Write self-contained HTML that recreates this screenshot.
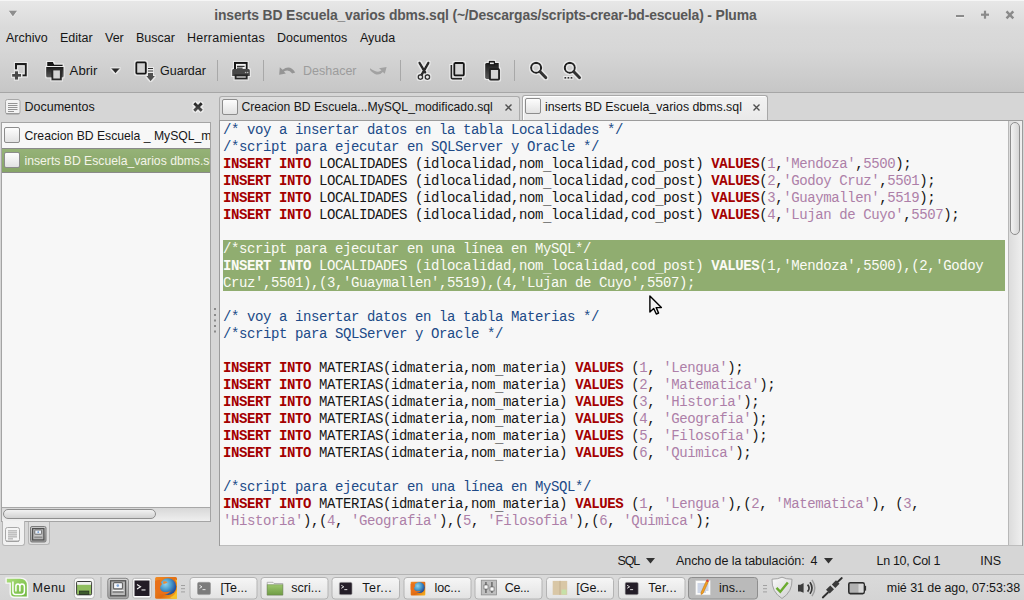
<!DOCTYPE html>
<html><head><meta charset="utf-8">
<style>
*{margin:0;padding:0;box-sizing:border-box}
html,body{width:1024px;height:600px;overflow:hidden;background:#d6d6d6;font-family:"Liberation Sans",sans-serif;color:#333;position:relative}
.a{position:absolute}
svg{position:absolute;overflow:visible}
.t{position:absolute;white-space:pre;line-height:1;font-size:12.5px;color:#161616}
#hdr{left:0;top:0;width:1024px;height:93px;background:linear-gradient(#e8e8e8 0px,#dadada 28px,#d7d7d7 48px,#d3d3d3 60px,#c6c6c6 92px);border-bottom:1px solid #a6a6a6}
#hdr:before{content:"";position:absolute;left:0;top:0;width:1024px;height:1px;background:#f6f6f6}
#code{position:absolute;left:223px;top:122px;width:790px;height:424px;overflow:hidden;font-family:"Liberation Mono",monospace;font-size:14px;letter-spacing:-0.4px;line-height:17px;color:#151515;white-space:pre}
.ln{height:17px}
.u{position:relative;top:2px}
.kw{color:#a40000}
.cm{color:#204a87}
.st{color:#ad7fa8}
.sl{color:#fbfbf5}
.chk{position:absolute;width:16px;height:16px;border:1px solid #8c8c8c;border-radius:2px;background:linear-gradient(#fdfdfd,#e2e2e2)}
</style></head><body>
<div id="hdr" class="a"></div>
<div class="t" style="left:214.3px;top:8.7px;font-size:13.9px;letter-spacing:-0.145px;font-weight:bold;color:#585858">inserts BD Escuela_varios dbms.sql (~/Descargas/scripts-crear-bd-escuela) - Pluma</div>
<div class="t" style="left:6px;top:31.5px">Archivo</div>
<div class="t" style="left:60px;top:31.5px">Editar</div>
<div class="t" style="left:105px;top:31.5px">Ver</div>
<div class="t" style="left:136px;top:31.5px">Buscar</div>
<div class="t" style="left:187px;top:31.5px;letter-spacing:0.24px">Herramientas</div>
<div class="t" style="left:277px;top:31.5px">Documentos</div>
<div class="t" style="left:360px;top:31.5px">Ayuda</div>
<div class="t" style="left:69.6px;top:63.7px;font-size:13.2px">Abrir</div>
<div class="t" style="left:160px;top:64.5px">Guardar</div>
<div class="t" style="left:303px;top:64.5px;color:#9c9c9c">Deshacer</div>
<svg style="left:0;top:0" width="1024" height="93">
<defs>
<linearGradient id="gd" x1="0" y1="0" x2="0" y2="1"><stop offset="0" stop-color="#1c1c1c"/><stop offset="1" stop-color="#5a5a5a"/></linearGradient>
<linearGradient id="gx" gradientUnits="userSpaceOnUse" x1="0" y1="102" x2="0" y2="112"><stop offset="0" stop-color="#1e1e1e"/><stop offset="1" stop-color="#555"/></linearGradient>
<filter id="glow" x="-20%" y="-20%" width="140%" height="140%"><feMorphology in="SourceAlpha" operator="dilate" radius="1" result="d"/><feFlood flood-color="#fff" flood-opacity="0.55"/><feComposite in2="d" operator="in" result="w"/><feMerge><feMergeNode in="w"/><feMergeNode in="SourceGraphic"/></feMerge></filter>
</defs>
<!-- title triangle -->
<path d="M8.6 11.6H17.1L12.85 17.6Z" fill="#fafafa" opacity="0.8"/><path d="M8.8 10.8H17L12.9 16.4Z" fill="#8e8e8e"/>
<!-- window buttons -->
<rect x="956" y="15" width="8" height="2.2" fill="#8a8a8a"/>
<rect x="956" y="17.2" width="8" height="1" fill="#f4f4f4"/>
<rect x="981" y="13.6" width="8" height="2.2" fill="#8a8a8a"/>
<rect x="983.9" y="10.7" width="2.2" height="8" fill="#8a8a8a"/>
<path d="M1006.5 11.3L1013.3 18.3M1013.3 11.3L1006.5 18.3" stroke="#8a8a8a" stroke-width="2.4"/>
<g filter="url(#glow)">
<!-- new -->
<path d="M16 69.5V64.1H25.8V75.3H22.3" fill="none" stroke="#1e1e1e" stroke-width="2.2"/>
<rect x="12.1" y="74" width="8.9" height="2.8" fill="#484848"/>
<rect x="14.9" y="71.2" width="3.1" height="8.5" fill="#484848"/>
<!-- open -->
<path d="M47.1 62.1H53L54.2 64.4H62.8V66H47.1Z" fill="#151515"/>
<path d="M46.1 67.1H63.7V76Q63.7 77.5 62.2 77.5H47.6Q46.1 77.5 46.1 76Z" fill="url(#gd)"/>
<rect x="52.3" y="69.4" width="8.6" height="10.1" fill="#d4d4d4" stroke="#2a2a2a" stroke-width="2"/>
<!-- dropdown -->
<path d="M111 68.3H120L115.5 73.3Z" fill="#2a2a2a"/>
<!-- save -->
<rect x="136.2" y="62.2" width="9.7" height="11.5" rx="1" fill="#d2d2d2" stroke="#151515" stroke-width="2"/>
<rect x="148" y="68" width="5" height="1" fill="#333"/>
<rect x="148" y="70.4" width="5" height="1.2" fill="#333"/>
<rect x="148" y="73" width="5" height="3.2" fill="#505050"/>
<path d="M146.2 76.1H155L150.6 81.3Z" fill="#505050"/>
<!-- print -->
<rect x="235" y="62.9" width="11.8" height="7" fill="#f4f4f4" stroke="#151515" stroke-width="2"/>
<rect x="237" y="65.8" width="7.6" height="1.1" fill="#222"/>
<rect x="237" y="67.6" width="5.6" height="1.1" fill="#222"/>
<path d="M233.5 69H248.5Q249.9 69 249.9 70.4V76.1H232.1V70.4Q232.1 69 233.5 69Z" fill="#464646"/>
<circle cx="245.6" cy="72.5" r="0.8" fill="#bbb"/><circle cx="247.7" cy="72.5" r="0.8" fill="#bbb"/>
<rect x="235.5" y="75.4" width="11.3" height="3.2" fill="#eaeaea" stroke="#262626" stroke-width="2"/>
<!-- cut -->
<path d="M419.5 62.8L425.2 72.5M428.4 62.8L421.8 74.5" stroke="#2a2a2a" stroke-width="2.6" stroke-linecap="round"/>
<circle cx="420.4" cy="77.1" r="2.2" fill="none" stroke="#333" stroke-width="1.6"/>
<circle cx="427.4" cy="77.1" r="2.2" fill="none" stroke="#333" stroke-width="1.6"/>
<!-- copy -->
<path d="M451.3 65V77.5Q451.3 78.7 452.5 78.7H462" fill="none" stroke="#262626" stroke-width="1.9"/>
<rect x="454.2" y="63" width="9.7" height="12.6" rx="1" fill="#d4d4d4" stroke="#161616" stroke-width="2"/>
<!-- paste -->
<path d="M486.5 62.9H498.9V79H486.5Q485.1 79 485.1 77.6V64.3Q485.1 62.9 486.5 62.9Z" fill="url(#gd)"/>
<rect x="488.6" y="60.8" width="6.5" height="4.4" rx="1" fill="#1a1a1a"/>
<rect x="490" y="62.5" width="3.8" height="1.6" fill="#e8e8e8"/>
<rect x="489.9" y="69.1" width="9.2" height="10.6" rx="0.8" fill="#d4d4d4" stroke="#222" stroke-width="2"/>
<!-- find -->
<circle cx="536.1" cy="67.8" r="5" fill="none" stroke="#222" stroke-width="2.2"/>
<path d="M540 71.7L545.8 77.6" stroke="#333" stroke-width="3.2" stroke-linecap="round"/>
<circle cx="569.8" cy="67.8" r="5" fill="none" stroke="#222" stroke-width="2.2"/>
<path d="M573.7 71.7L579.5 77.6" stroke="#333" stroke-width="3.2" stroke-linecap="round"/>
<rect x="564.3" y="77" width="2" height="1.8" fill="#333"/><rect x="567.4" y="77" width="2" height="1.8" fill="#333"/><rect x="570.5" y="77" width="2" height="1.8" fill="#333"/>
</g>
<!-- undo / redo (disabled) -->
<path d="M279.8 67.3L279.2 74.7L285.9 73.4L283.8 71.6Q288.5 68.5 292.2 73.4L295.2 72.5Q290 64 282.6 69.8Z" fill="#959595"/>
<path d="M370 68.3Q377.85 73.9 381.5 70.3L379 68.2L386.6 66.9L384.8 73.8L382.8 72Q377.8 77.7 370.8 71Q369.6 69.5 370 68.3Z" fill="#a2a2a2"/>
<!-- separators -->
<rect x="217" y="60" width="1" height="21" fill="#a8a8a8"/>
<rect x="263" y="60" width="1" height="21" fill="#a8a8a8"/>
<rect x="400" y="60" width="1" height="21" fill="#a8a8a8"/>
<rect x="514" y="60" width="1" height="21" fill="#a8a8a8"/>
<!-- side panel icons -->
<rect x="5.5" y="99.5" width="14.5" height="14.5" rx="2" fill="#f3f3f3" stroke="#a8a8a8"/>
<rect x="6" y="113" width="13.5" height="1.2" fill="#9a9a9a"/>
<g fill="#8a8a8a"><rect x="8" y="103" width="9.5" height="0.9"/><rect x="8" y="105" width="9.5" height="0.9"/><rect x="8" y="107" width="9.5" height="0.9"/><rect x="8" y="109" width="9.5" height="0.9"/><rect x="8" y="111" width="6" height="0.9"/></g>
<g filter="url(#glow)"><path d="M194.2 103.2L201.8 110.8M201.8 103.2L194.2 110.8" stroke="url(#gx)" stroke-width="3.1" stroke-linecap="butt"/></g>
</svg>

<!-- side panel -->
<div class="t" style="left:24.5px;top:100.5px">Documentos</div>
<div class="a" style="left:1px;top:122px;width:210px;height:400px;background:#f7f7f7;border:1px solid #a4a4a4"></div>
<div class="a" style="left:2px;top:148px;width:208px;height:25px;background:linear-gradient(#95b277,#87a567);border-top:1px solid #8a8a8a;border-bottom:1px solid #8a8a8a"></div>
<div class="chk" style="left:4px;top:127px"></div>
<div class="chk" style="left:4px;top:152px"></div>
<div class="a" style="left:24px;top:128px;width:186px;height:20px;overflow:hidden"><div class="t" style="left:0.5px;top:1.5px;font-size:12.2px">Creacion BD Escuela _ MySQL_modificado.sql</div></div>
<div class="a" style="left:24px;top:153px;width:186px;height:20px;overflow:hidden"><div class="t" style="left:0.5px;top:1.5px;font-size:12.2px;color:#f4f4e8">inserts BD Escuela_varios dbms.sql</div></div>
<!-- h scrollbar -->
<div class="a" style="left:2px;top:507px;width:208px;height:14px;background:linear-gradient(#d8d8d8,#efefef);border-top:1px solid #a8a8a8"></div>
<div class="a" style="left:3px;top:509px;width:153px;height:10px;border:1px solid #8e8e8e;border-radius:5px;background:linear-gradient(#f2f2f2,#d2d2d2)"></div>
<!-- panel tabs -->
<div class="a" style="left:2px;top:521px;width:23px;height:25px;background:#f1f1f1;border:1px solid #b5b5b5;border-top:none;border-radius:0 0 3px 3px"></div>
<div class="a" style="left:28px;top:522px;width:22px;height:23px;background:#dedede;border:1px solid #b5b5b5;border-top:none;border-radius:0 0 3px 3px"></div>
<svg style="left:0;top:520px" width="60" height="30">
<rect x="5.5" y="7.5" width="14" height="14" rx="2" fill="#f5f5f5" stroke="#a8a8a8"/>
<rect x="6" y="20.6" width="13" height="1" fill="#9c9c9c"/>
<g fill="#8c8c8c"><rect x="8" y="10.5" width="9" height="0.8"/><rect x="8" y="12.5" width="9" height="0.8"/><rect x="8" y="14.5" width="9" height="0.8"/><rect x="8" y="16.5" width="9" height="0.8"/><rect x="8" y="18.5" width="5" height="0.8"/></g>
<rect x="30.5" y="6.5" width="15.5" height="15.5" rx="1.5" fill="url(#cg2)" stroke="#7a7a7a"/>
<defs><linearGradient id="cg2" x1="0" y1="0" x2="0" y2="1"><stop offset="0" stop-color="#c8c8c8"/><stop offset="1" stop-color="#9a9a9a"/></linearGradient></defs>
<rect x="32.6" y="8.6" width="11.3" height="11.3" fill="#b4b4b4" stroke="#505050" stroke-width="1.2"/>
<rect x="34.8" y="10" width="6.8" height="4.2" rx="0.6" fill="#eef2f8" stroke="#666" stroke-width="0.9"/>
<circle cx="38.2" cy="12.1" r="0.9" fill="#6a96d0"/>
<rect x="34.3" y="15.6" width="8" height="1" fill="#e8e8e8"/><rect x="34.3" y="16.6" width="8" height="0.9" fill="#666"/>
</svg>
<!-- grip -->
<div class="a" style="left:214px;top:308px;width:2px;height:2px;background:#8a8a8a;box-shadow:0 6px #8a8a8a,0 11.5px #8a8a8a,0 17px #8a8a8a,0 22.5px #8a8a8a"></div>
<!-- notebook tabs -->
<div class="a" style="left:219px;top:96px;width:301px;height:25px;background:linear-gradient(#dedede,#d8d8d8);border:1px solid #acacac;border-bottom:none;border-radius:3px 3px 0 0"></div>
<div class="a" style="left:522px;top:95px;width:246px;height:26px;background:linear-gradient(#f2f2f2,#e9e9e9);border:1px solid #a8a8a8;border-bottom:none;border-radius:3px 3px 0 0;box-shadow:inset 1px 1px #fff"></div>
<div class="chk" style="left:222px;top:99px;width:16px;height:16px"></div>
<div class="chk" style="left:525px;top:98px;width:16px;height:16px"></div>
<div class="t" style="left:241.5px;top:100.5px;font-size:12.2px">Creacion BD Escuela...MySQL_modificado.sql</div>
<div class="t" style="left:545px;top:100.5px;font-size:12.35px">inserts BD Escuela_varios dbms.sql</div>
<svg style="left:505px;top:103.5px" width="7" height="7"><path d="M0.5 0.5L6.5 6.5M6.5 0.5L0.5 6.5" stroke="#505050" stroke-width="1.4"/></svg>
<svg style="left:753px;top:103.5px" width="7" height="7"><path d="M0.5 0.5L6.5 6.5M6.5 0.5L0.5 6.5" stroke="#505050" stroke-width="1.4"/></svg>
<!-- editor -->
<div class="a" style="left:219px;top:120px;width:804px;height:426px;background:#f7f7f7;border:1px solid #9c9c9c"></div>
<div class="a" style="left:223px;top:240px;width:782px;height:51px;background:#90ad70"></div>
<div id="code"><div class="ln"><span class="cm">/* voy a insertar datos en la tabla Localidades */</span></div><div class="ln"><span class="cm">/*script para ejecutar en SQLServer y Oracle */</span></div><div class="ln"><b class="kw">INSERT</b> <b class="kw">INTO</b> LOCALIDADES (idlocalidad,nom<span class="u">_</span>localidad,cod<span class="u">_</span>post) <b class="kw">VALUES</b>(<span class="st">1</span>,<span class="st">&#x27;Mendoza&#x27;</span>,<span class="st">5500</span>);</div><div class="ln"><b class="kw">INSERT</b> <b class="kw">INTO</b> LOCALIDADES (idlocalidad,nom<span class="u">_</span>localidad,cod<span class="u">_</span>post) <b class="kw">VALUES</b>(<span class="st">2</span>,<span class="st">&#x27;Godoy Cruz&#x27;</span>,<span class="st">5501</span>);</div><div class="ln"><b class="kw">INSERT</b> <b class="kw">INTO</b> LOCALIDADES (idlocalidad,nom<span class="u">_</span>localidad,cod<span class="u">_</span>post) <b class="kw">VALUES</b>(<span class="st">3</span>,<span class="st">&#x27;Guaymallen&#x27;</span>,<span class="st">5519</span>);</div><div class="ln"><b class="kw">INSERT</b> <b class="kw">INTO</b> LOCALIDADES (idlocalidad,nom<span class="u">_</span>localidad,cod<span class="u">_</span>post) <b class="kw">VALUES</b>(<span class="st">4</span>,<span class="st">&#x27;Lujan de Cuyo&#x27;</span>,<span class="st">5507</span>);</div><div class="ln">&#8203;</div><div class="ln sl">/*script para ejecutar en una línea en MySQL*/</div><div class="ln sl"><b>INSERT</b> <b>INTO</b> LOCALIDADES (idlocalidad,nom<span class="u">_</span>localidad,cod<span class="u">_</span>post) <b>VALUES</b>(1,&#x27;Mendoza&#x27;,5500),(2,&#x27;Godoy</div><div class="ln sl">Cruz&#x27;,5501),(3,&#x27;Guaymallen&#x27;,5519),(4,&#x27;Lujan de Cuyo&#x27;,5507);</div><div class="ln">&#8203;</div><div class="ln"><span class="cm">/* voy a insertar datos en la tabla Materias */</span></div><div class="ln"><span class="cm">/*script para SQLServer y Oracle */</span></div><div class="ln">&#8203;</div><div class="ln"><b class="kw">INSERT</b> <b class="kw">INTO</b> MATERIAS(idmateria,nom<span class="u">_</span>materia) <b class="kw">VALUES</b> (<span class="st">1</span>, <span class="st">&#x27;Lengua&#x27;</span>);</div><div class="ln"><b class="kw">INSERT</b> <b class="kw">INTO</b> MATERIAS(idmateria,nom<span class="u">_</span>materia) <b class="kw">VALUES</b> (<span class="st">2</span>, <span class="st">&#x27;Matematica&#x27;</span>);</div><div class="ln"><b class="kw">INSERT</b> <b class="kw">INTO</b> MATERIAS(idmateria,nom<span class="u">_</span>materia) <b class="kw">VALUES</b> (<span class="st">3</span>, <span class="st">&#x27;Historia&#x27;</span>);</div><div class="ln"><b class="kw">INSERT</b> <b class="kw">INTO</b> MATERIAS(idmateria,nom<span class="u">_</span>materia) <b class="kw">VALUES</b> (<span class="st">4</span>, <span class="st">&#x27;Geografia&#x27;</span>);</div><div class="ln"><b class="kw">INSERT</b> <b class="kw">INTO</b> MATERIAS(idmateria,nom<span class="u">_</span>materia) <b class="kw">VALUES</b> (<span class="st">5</span>, <span class="st">&#x27;Filosofia&#x27;</span>);</div><div class="ln"><b class="kw">INSERT</b> <b class="kw">INTO</b> MATERIAS(idmateria,nom<span class="u">_</span>materia) <b class="kw">VALUES</b> (<span class="st">6</span>, <span class="st">&#x27;Quimica&#x27;</span>);</div><div class="ln">&#8203;</div><div class="ln"><span class="cm">/*script para ejecutar en una línea en MySQL*/</span></div><div class="ln"><b class="kw">INSERT</b> <b class="kw">INTO</b> MATERIAS(idmateria,nom<span class="u">_</span>materia) <b class="kw">VALUES</b> (<span class="st">1</span>, <span class="st">&#x27;Lengua&#x27;</span>),(<span class="st">2</span>, <span class="st">&#x27;Matematica&#x27;</span>), (<span class="st">3</span>,</div><div class="ln"><span class="st">&#x27;Historia&#x27;</span>),(<span class="st">4</span>, <span class="st">&#x27;Geografia&#x27;</span>),(<span class="st">5</span>, <span class="st">&#x27;Filosofia&#x27;</span>),(<span class="st">6</span>, <span class="st">&#x27;Quimica&#x27;</span>);</div></div>
<div class="a" style="left:220px;top:545px;width:802px;height:1px;background:#bdbdbd"></div>
<div class="a" style="left:1008px;top:121px;width:14px;height:424px;background:linear-gradient(90deg,#dcdcdc,#efefef);border-left:1px solid #b8b8b8"></div>
<div class="a" style="left:1010px;top:122px;width:10px;height:113px;border:1px solid #8e8e8e;border-radius:5px;background:linear-gradient(90deg,#f2f2f2,#d6d6d6)"></div>
<svg style="left:645px;top:290px" width="20" height="26"><path d="M4.9 6V22L8.7 18.5L11.3 24L13.6 23L11.2 17.6H16.4Z" fill="#f2f2f2" stroke="#000" stroke-width="1.4" stroke-linejoin="round"/></svg>
<!-- status -->
<div class="t" style="left:617.5px;top:554.5px;letter-spacing:-1.2px">SQL</div>
<svg style="left:646px;top:558px" width="9" height="6"><path d="M0 0H9L4.5 5.5Z" fill="#333"/></svg>
<div class="t" style="left:676px;top:554.5px;letter-spacing:-0.06px">Ancho de la tabulación:</div><div class="t" style="left:810.6px;top:554.5px">4</div>
<svg style="left:824px;top:558px" width="9" height="6"><path d="M0 0H9L4.5 5.5Z" fill="#333"/></svg>
<div class="t" style="left:876.6px;top:554.5px;letter-spacing:-0.33px">Ln 10, Col 1</div>
<div class="t" style="left:980.3px;top:554.5px">INS</div>
<div class="a" style="left:0;top:574px;width:1024px;height:1px;background:#b4b4b4"></div>
<div class="a" style="left:0;top:575px;width:1024px;height:25px;background:linear-gradient(#dadada,#d4d4d4)"></div>
<svg style="left:0;top:575px" width="1024" height="25">
<defs>
<linearGradient id="mint" x1="0" y1="0" x2="1" y2="1"><stop offset="0" stop-color="#a9dc78"/><stop offset="1" stop-color="#6fb83e"/></linearGradient>
<linearGradient id="btn" x1="0" y1="0" x2="0" y2="1"><stop offset="0" stop-color="#f6f6f6"/><stop offset="1" stop-color="#e2e2e2"/></linearGradient>
<linearGradient id="fold" x1="0" y1="0" x2="0" y2="1"><stop offset="0" stop-color="#9cc66c"/><stop offset="1" stop-color="#6f9c45"/></linearGradient>
<linearGradient id="gray" x1="0" y1="0" x2="0" y2="1"><stop offset="0" stop-color="#a6a6a6"/><stop offset="1" stop-color="#6c6c6c"/></linearGradient>
<linearGradient id="shld" x1="0" y1="0" x2="1" y2="1"><stop offset="0" stop-color="#fafafa"/><stop offset="1" stop-color="#cfcfcf"/></linearGradient>
<radialGradient id="ff" cx="0.55" cy="0.45" r="0.6"><stop offset="0" stop-color="#7fc7e8"/><stop offset="0.55" stop-color="#2f78b8"/><stop offset="1" stop-color="#1d3f8a"/></radialGradient>
</defs>
<!-- mint logo -->
<path d="M6.2 3.2H20Q27.5 3.2 27.5 10.5V22.2H14.5Q10.3 22.2 10.3 18V8H6.2Z" fill="#fff" opacity="0.8" stroke="#fff" stroke-width="1.6"/>
<path d="M6.8 3.8H20Q26.8 3.8 26.8 10.5V21.6H14.5Q10.9 21.6 10.9 18V7.6H6.8Z" fill="url(#mint)"/>
<path d="M12.9 6.6V16.8Q12.9 19.4 15.5 19.4H21.6Q24.4 19.4 24.4 16.6V11.6Q24.4 8.9 21.9 8.9Q19.9 8.9 19.9 11.2V16.6M19.9 11.2Q19.9 8.9 17.9 8.9Q15.9 8.9 15.9 11.2V16.6" fill="none" stroke="#fff" stroke-width="1.5"/>
<!-- show desktop -->
<rect x="74.3" y="3" width="20" height="20.5" rx="3" fill="#f8f8f8" stroke="#b8b8b8"/>
<rect x="76.6" y="6.5" width="15" height="13.3" rx="1" fill="#8fbd5e" stroke="#3a3a3a"/>
<rect x="77.1" y="7" width="14" height="2.8" fill="#efefef"/>
<rect x="79.3" y="16" width="9.6" height="3.6" fill="#3d5a2c" stroke="#222" stroke-width="0.6"/>
<rect x="100.5" y="2" width="1" height="21" fill="#b0b0b0"/>
<!-- computer -->
<defs><linearGradient id="cg" x1="0" y1="0" x2="0" y2="1"><stop offset="0" stop-color="#d6d6d6"/><stop offset="1" stop-color="#a2a2a2"/></linearGradient></defs>
<rect x="107.8" y="3.3" width="20.6" height="20.4" rx="2.5" fill="url(#cg)" stroke="#858585"/>
<rect x="110.6" y="5.8" width="15" height="15" fill="#bababa" stroke="#555" stroke-width="1.4"/>
<rect x="113.5" y="7.6" width="9" height="6.2" rx="1" fill="#f4f6fa" stroke="#666" stroke-width="1.2"/>
<circle cx="117.8" cy="10.6" r="1.3" fill="#80a6d8"/>
<rect x="112.6" y="15" width="11" height="1.4" fill="#eeeeee"/>
<rect x="112.6" y="16.4" width="11" height="1.2" fill="#666"/>
<!-- terminal -->
<rect x="132.7" y="3.3" width="18.5" height="19.8" rx="2" fill="#fbfbfb" stroke="#b6b6b6"/>
<rect x="134.5" y="5.5" width="15" height="15.5" fill="#221c26"/>
<path d="M137 9.5L140.5 11.8L137 14" fill="none" stroke="#eee" stroke-width="1.2"/>
<rect x="141.5" y="14.4" width="4" height="1.1" fill="#eee"/>
<!-- firefox -->
<defs><linearGradient id="ffo" x1="0" y1="0" x2="1" y2="1"><stop offset="0" stop-color="#f08a24"/><stop offset="0.6" stop-color="#e06a10"/><stop offset="1" stop-color="#f6b820"/></linearGradient>
<radialGradient id="ffb" cx="0.35" cy="0.35" r="0.75"><stop offset="0" stop-color="#8fd3ec"/><stop offset="0.45" stop-color="#4a9ccc"/><stop offset="1" stop-color="#16388c"/></radialGradient></defs>
<rect x="155.1" y="2.1" width="21.9" height="21.7" rx="1.5" fill="url(#ffo)"/>
<circle cx="168" cy="11.6" r="8.3" fill="url(#ffb)"/>
<path d="M175.2 4.5Q177.3 8 177 13Q176.5 20 170 22.5L173 23.8H177V5Z" fill="#f5c22a"/>
<path d="M155.1 6Q158 4.5 160.5 5Q159.5 7.2 162 9Q160 11 160 13Q161 17.5 166 17Q169 17 171 16Q168 19.5 163 19.5Q157.5 19 155.1 14Z" fill="#e8701a"/>
<path d="M163 6.5Q166 5.5 167.5 7.5Q165 8.5 163.5 9Z" fill="#f08a30"/>
<!-- grips -->
<g fill="#a0a0a0"><rect x="181" y="10" width="4" height="1"/><rect x="181" y="13.2" width="4" height="1"/><rect x="181" y="16.4" width="4" height="1"/>
<rect x="763" y="10" width="4" height="1"/><rect x="763" y="13.2" width="4" height="1"/><rect x="763" y="16.4" width="4" height="1"/></g>
<!-- buttons -->
<g stroke="#b4b4b4" fill="url(#btn)">
<rect x="190" y="2.5" width="67" height="21.5" rx="3"/>
<rect x="261" y="2.5" width="67" height="21.5" rx="3"/>
<rect x="332" y="2.5" width="67.5" height="21.5" rx="3"/>
<rect x="404" y="2.5" width="67" height="21.5" rx="3"/>
<rect x="475" y="2.5" width="67" height="21.5" rx="3"/>
<rect x="546.5" y="2.5" width="67" height="21.5" rx="3"/>
<rect x="618.5" y="2.5" width="66.5" height="21.5" rx="3"/>
</g>
<rect x="688.5" y="2.5" width="69" height="21.5" rx="3" fill="#bababa" stroke="#8e8e8e"/>
<!-- btn1 gray terminal -->
<rect x="197.5" y="7.3" width="13" height="12.3" rx="1.5" fill="#7b7b7b" stroke="#9a9a9a" stroke-width="0.6"/>
<path d="M199.5 10.3L202 11.8L199.5 13.3" fill="none" stroke="#eee" stroke-width="0.9"/><rect x="202.5" y="14.2" width="3" height="0.9" fill="#eee"/>
<!-- btn2 folder -->
<path d="M267.2 7.3H273L274 8.5H282.8V20H267.2Z" fill="#f4f4f4" stroke="#9a9a9a" stroke-width="0.7"/>
<rect x="267.2" y="9.8" width="15.6" height="10.2" fill="url(#fold)" stroke="#6a8a4a" stroke-width="0.6"/>
<!-- btn3 terminal -->
<rect x="339.3" y="7.3" width="12.8" height="12.5" rx="1.5" fill="#241e28" stroke="#bbb" stroke-width="0.6"/>
<path d="M341.3 10.3L343.8 11.8L341.3 13.3" fill="none" stroke="#eee" stroke-width="0.9"/><rect x="344.3" y="14.2" width="3" height="0.9" fill="#eee"/>
<!-- btn4 firefox small -->
<rect x="410.7" y="6.8" width="14.6" height="13.6" rx="1" fill="url(#ffo)"/>
<circle cx="419.3" cy="12.6" r="5.5" fill="url(#ffb)"/>
<path d="M410.7 9Q412.5 8 414.3 8.3Q413.7 9.8 415.3 11Q414 12.3 414 13.5Q414.7 16.4 418 16.2Q420 16.2 421.3 15.5Q419.3 17.8 416 17.8Q412.3 17.5 410.7 14.5Z" fill="#e8701a"/>
<!-- btn5 settings -->
<rect x="481.3" y="5.2" width="15.2" height="14.7" fill="#bfbfbf" stroke="#8c8c8c" stroke-width="0.8"/>
<rect x="485.5" y="7" width="0.9" height="11" fill="#333"/><rect x="491.5" y="7" width="0.9" height="11" fill="#333"/>
<rect x="484" y="10" width="4" height="4" fill="#fafafa" stroke="#444" stroke-width="0.5"/><rect x="490" y="12" width="4" height="4" fill="#fafafa" stroke="#444" stroke-width="0.5"/>
<!-- btn6 package -->
<rect x="552.7" y="5.9" width="14.5" height="14" fill="#d9c7a6"/>
<rect x="559.5" y="5.9" width="1" height="14" fill="#c4b08e"/>
<rect x="561.5" y="14.5" width="5" height="5" fill="#c6e0a8"/>
<!-- btn7 terminal -->
<rect x="625.1" y="7.3" width="13.2" height="12.5" rx="1.5" fill="#241e28" stroke="#bbb" stroke-width="0.6"/>
<path d="M627.1 10.3L629.6 11.8L627.1 13.3" fill="none" stroke="#eee" stroke-width="0.9"/><rect x="630.1" y="14.2" width="3" height="0.9" fill="#eee"/>
<!-- btn8 pluma -->
<rect x="695.5" y="5.5" width="15" height="14.5" fill="#fafafa" stroke="#c8c8c8" stroke-width="0.6"/>
<g stroke="#8ca0c8" stroke-width="0.8"><path d="M697.5 9H708.5M697.5 11H708.5M697.5 13H708.5M697.5 15H708.5M697.5 17H706"/></g>
<path d="M706.5 5.5L708.5 6.5L703 18.5L701 19.5L701 17.5Z" fill="#f0a020" stroke="#b86a10" stroke-width="0.5"/>
<circle cx="707.5" cy="5.8" r="1.2" fill="#e04040"/>
<!-- shield -->
<path d="M782 2.2Q786 4.2 792 4.2Q792.5 17 782 23.5Q771.5 17 772 4.2Q778 4.2 782 2.2Z" fill="url(#shld)" stroke="#9a9a9a" stroke-width="0.9"/>
<path d="M776.5 12.8L780.3 16.8L787.8 7.5" fill="none" stroke="#6aab2e" stroke-width="2.4"/>
<!-- volume -->
<path d="M798 9.8H800.5L803.6 8V17.8L800.5 16.6H798Z" fill="#3d3d3d"/>
<path d="M807.6 9.6Q810.6 13 807.6 16.6M810 7.2Q814 13 810 18.8" fill="none" stroke="#3a3a3a" stroke-width="1.7"/>
<path d="M812 4.8Q817.6 13 812 21.2" fill="none" stroke="#a0a0a0" stroke-width="1.5"/>
<!-- plug -->
<path d="M822.8 22.5L828 17.5M836.5 8L841.8 3" stroke="#2e2e2e" stroke-width="1.8" stroke-linecap="round"/>
<path d="M826 14.8L830.3 10.5L834 14.2L829.7 18.5Z" fill="#3a3a3a" transform="rotate(0)"/>
<path d="M831.8 9.5L836 5.3L839.5 8.8L835.3 13Z" fill="#3a3a3a"/>
<!-- battery -->
<rect x="848.8" y="7.8" width="15.4" height="10.8" rx="1.5" fill="#b2b2b2" stroke="#2e2e2e" stroke-width="1.6"/>
<rect x="858.5" y="9" width="5" height="8.4" fill="#d8d8d8"/>
<rect x="864.5" y="10.8" width="1.6" height="4.8" fill="#2e2e2e"/>
</svg>
<div class="t" style="left:32.6px;top:581.5px;font-size:12.6px;letter-spacing:0.4px">Menu</div>
<div class="t" style="left:220.4px;top:581.5px">[Te...</div>
<div class="t" style="left:291.3px;top:581.5px">scri...</div>
<div class="t" style="left:362.2px;top:581.5px;letter-spacing:0.5px">Ter...</div>
<div class="t" style="left:434.4px;top:581.5px">loc...</div>
<div class="t" style="left:504.8px;top:581.5px;letter-spacing:-0.35px">Ce...</div>
<div class="t" style="left:576.2px;top:581.5px">[Ge...</div>
<div class="t" style="left:648.2px;top:581.5px;letter-spacing:0.3px">Ter...</div>
<div class="t" style="left:719.1px;top:581.5px">ins...</div>
<div class="t" style="left:886.8px;top:581.5px;letter-spacing:-0.07px">mié 31 de ago, 07:53:38</div>

</body></html>
